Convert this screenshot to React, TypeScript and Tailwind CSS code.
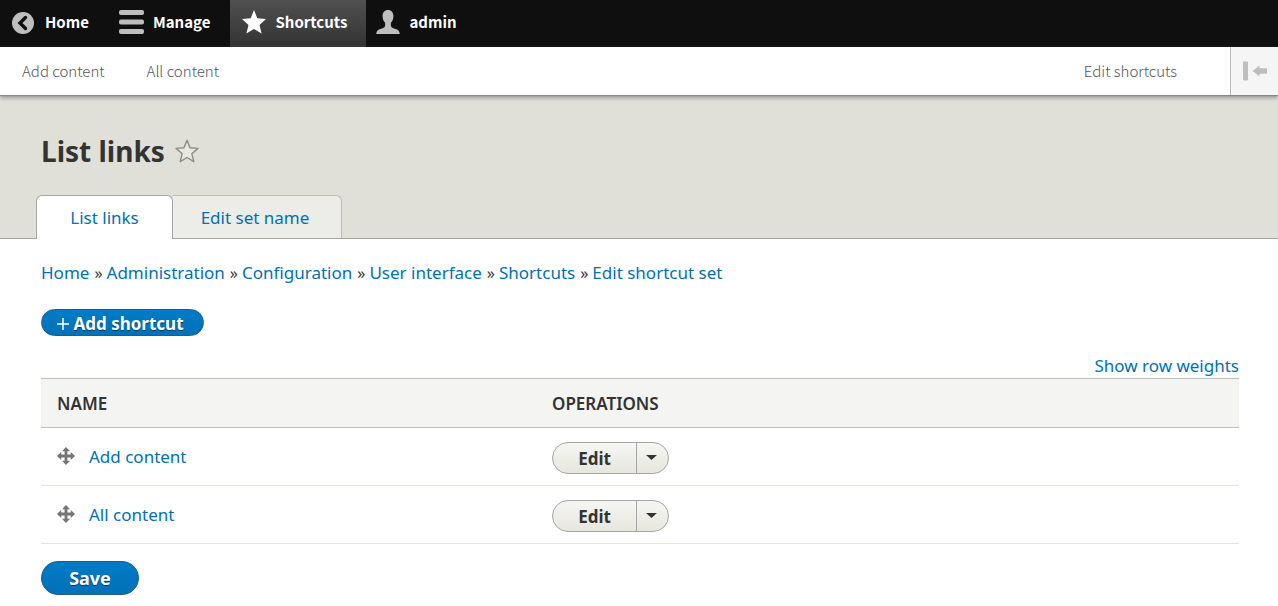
import type { ReactNode } from 'react';

const bar = "font-['Noto_Sans_CJK_SC','Noto_Sans',sans-serif]";
const crumbs = ['Home', 'Administration', 'Configuration', 'User interface', 'Shortcuts', 'Edit shortcut set'];
const rows = ['Add content', 'All content'];

function ToolbarTab({ icon, label, className }: { icon: ReactNode; label: string; className: string }) {
  return (
    <a href="#" className={`flex h-full items-center text-[15px] font-bold text-white ${className}`}>
      {icon}
      <span className="pb-1">{label}</span>
    </a>
  );
}

function BackIcon() {
  return (
    <svg className="mb-0.5 size-[22px]" viewBox="0 0 22 22" aria-hidden="true">
      <circle cx="11" cy="11" r="11" fill="#bebebe" />
      <path d="M13.500 5.500 8 11l5.500 5.500" fill="none" stroke="#0f0f0f" strokeWidth="3.400" strokeLinecap="round" />
    </svg>
  );
}

function MenuIcon() {
  return (
    <svg className="mb-1 h-6 w-[25px]" viewBox="0 0 25 24" fill="#bebebe" aria-hidden="true">
      <rect width="25" height="5" rx="2" />
      <rect y="9.5" width="25" height="5" rx="2" />
      <rect y="19" width="25" height="5" rx="2" />
    </svg>
  );
}

function StarIcon() {
  return (
    <svg className="mb-1 size-6" viewBox="0 0 24 24" fill="#fff" aria-hidden="true">
      <path d="M12 0l3.300 8.200L24 9l-6.500 6 2.100 8.600L12 19l-7.600 4.600L6.500 15 0 9l8.700-.8z" />
    </svg>
  );
}

function PersonIcon() {
  return (
    <svg className="mb-1 size-6" viewBox="0 0 24 24" fill="#bebebe" aria-hidden="true">
      <path d="M12 0C8.500 0 6.600 2.600 6.600 6c0 3 1 5.400 2.500 6.800v2.700c0 1.800-1.600 2.500-4.100 3.300C2 19.800.5 21 .2 24h23.600c-.3-3-1.800-4.200-4.800-5.200-2.500-.8-4.100-1.500-4.100-3.300v-2.700c1.500-1.400 2.500-3.800 2.500-6.800 0-3.400-1.900-6-5.400-6z" />
    </svg>
  );
}

function MoveIcon() {
  return (
    <svg className="mb-0.5 size-[18px] shrink-0" viewBox="0 0 18 18" fill="#757575" aria-hidden="true">
      <path d="M9 0l4 4.200h-2.600v3.400h3.400V5L18 9l-4.200 4v-2.600h-3.400v3.400H13L9 18l-4-4.200h2.600v-3.400H4.200V13L0 9l4.200-4v2.600h3.400V4.200H5z" />
    </svg>
  );
}

export default function App() {
  return (
    <div className="min-h-screen bg-white font-['Noto_Sans',sans-serif] text-[17px] leading-6 text-[#333]">
      <nav className={`flex h-[47px] items-center bg-[#0f0f0f] ${bar}`} aria-label="Toolbar">
        <ToolbarTab icon={<BackIcon />} label="Home" className="gap-[11px] pr-[15px] pl-3" />
        <ToolbarTab icon={<MenuIcon />} label="Manage" className="gap-[9px] pr-5 pl-[15px]" />
        <ToolbarTab icon={<StarIcon />} label="Shortcuts" className="gap-[9px] bg-linear-to-b from-[#505050] to-[#333] pr-[19px] pl-3" />
        <ToolbarTab icon={<PersonIcon />} label="admin" className="gap-[9px] px-2.5" />
      </nav>

      <div className={`relative flex h-12 items-center bg-white text-[15px] font-light text-[#565656] shadow-[0_1px_1px_#888,0_3px_4px_#999] ${bar}`}>
        <a href="#" className="pl-[22px]">Add content</a>
        <a href="#" className="pl-[42px]">All content</a>
        <a href="#" className="ml-auto pr-[53px]">Edit shortcuts</a>
        <button type="button" aria-label="Vertical orientation" className="flex h-full w-12 items-center justify-center border-l border-[#bbb] bg-[#f5f5f5]">
          <svg className="h-5 w-6" viewBox="0 0 24 20" fill="#bebebe" aria-hidden="true">
            <rect y=".5" width="5" height="19" rx="1" />
            <path d="M9.500 10 16.500 4.500v2.800H24v5.400h-7.500v2.800z" />
          </svg>
        </button>
      </div>

      <header className="border-b border-[#a6a6a6] bg-[#e0e0d8] px-9 pt-9">
        <div className="flex items-center gap-2.5 pl-[5px]">
          <h1 className="text-[28px] leading-10 font-bold">List links</h1>
          <button type="button" aria-label="Add to shortcuts">
            <svg className="size-6" viewBox="0 0 24 24" fill="#e8e8e1" stroke="#8c8c84" strokeWidth="1.400" strokeLinejoin="round" aria-hidden="true">
              <path d="M12 1.200l3 7.500 8 .7-6.200 5.300 2 8L12 18.500l-6.800 4.200 2-8L1 9.400l8-.7z" />
            </svg>
          </button>
        </div>
        <nav className="mt-6 -mb-px flex h-11" aria-label="Tabs">
          <a href="#" className="flex w-[137px] items-center justify-center rounded-t-md border border-b-0 border-[#a6a6a6] bg-white text-[#0071b3]">List links</a>
          <a href="#" className="mb-px flex w-[169px] items-center justify-center rounded-tr-md border border-b-0 border-l-0 border-[#bdbdb7] bg-[#ecece8] pt-px pr-1 text-[#0071b3]">Edit set name</a>
        </nav>
      </header>

      <main className="pt-[22px] pr-[39px] pb-3 pl-[41px]">
        <ol className="flex gap-[5px]" aria-label="Breadcrumb">
          {crumbs.map((name, i) => (
            <li key={name} className="flex gap-1">
              {i > 0 && <span className="text-base leading-6">»</span>}
              <a href="#" className="text-[#0071b3]">{name}</a>
            </li>
          ))}
        </ol>

        <a href="#" className="mt-6 flex h-[27px] w-[163px] items-center justify-center gap-1 rounded-full border border-[#1e5c90] bg-linear-to-b from-[#007bc6] to-[#0071b8] pt-0.5 pr-1 font-bold text-white text-shadow-[0_1px_1px_#00000080]">
          <svg className="size-3" viewBox="0 0 12 12" stroke="#fff" strokeWidth="1.500" aria-hidden="true">
            <path d="M6 0v12M0 6h12" />
          </svg>
          Add shortcut
        </a>

        <div className="mt-[18px] flex justify-end">
          <button type="button" className="text-[#0071b3]">Show row weights</button>
        </div>

        <table className="w-full table-fixed border-collapse text-left">
          <thead>
            <tr className="h-[49px] border-y border-[#bfbfba] bg-[#f4f4f2]">
              <th className="w-[495px] pt-px pl-4 font-semibold">NAME</th>
              <th className="pt-px pl-4 font-semibold">OPERATIONS</th>
            </tr>
          </thead>
          <tbody>
            {rows.map((name) => (
              <tr key={name} className="h-[58px] border-b border-[#e6e4df]">
                <td className="pl-4">
                  <div className="flex items-center gap-3.5">
                    <MoveIcon />
                    <a href="#" className="text-[#0071b3]">{name}</a>
                  </div>
                </td>
                <td className="pt-0.5 pl-4">
                  <div className="flex h-8 w-[117px] overflow-hidden rounded-full border border-[#a6a6a6] bg-linear-to-b from-[#f6f6f3] to-[#e7e7df]">
                    <a href="#" className="flex flex-1 items-center justify-center pt-0.5 font-bold">Edit</a>
                    <button type="button" aria-label={`List additional actions for ${name}`} className="flex w-8 items-center justify-center border-l border-[#a6a6a6] pr-0.5">
                      <svg className="h-[5px] w-[11px]" viewBox="0 0 11 5" fill="#333" aria-hidden="true"><path d="M0 0h11L5.500 5z" /></svg>
                    </button>
                  </div>
                </td>
              </tr>
            ))}
          </tbody>
        </table>

        <button type="submit" className="mt-[17px] h-[34px] w-[98px] rounded-full border border-[#1e5c90] bg-linear-to-b from-[#007bc6] to-[#0071b8] text-lg leading-6 font-bold text-white text-shadow-[0_1px_1px_#00000080]">Save</button>
      </main>
    </div>
  );
}
